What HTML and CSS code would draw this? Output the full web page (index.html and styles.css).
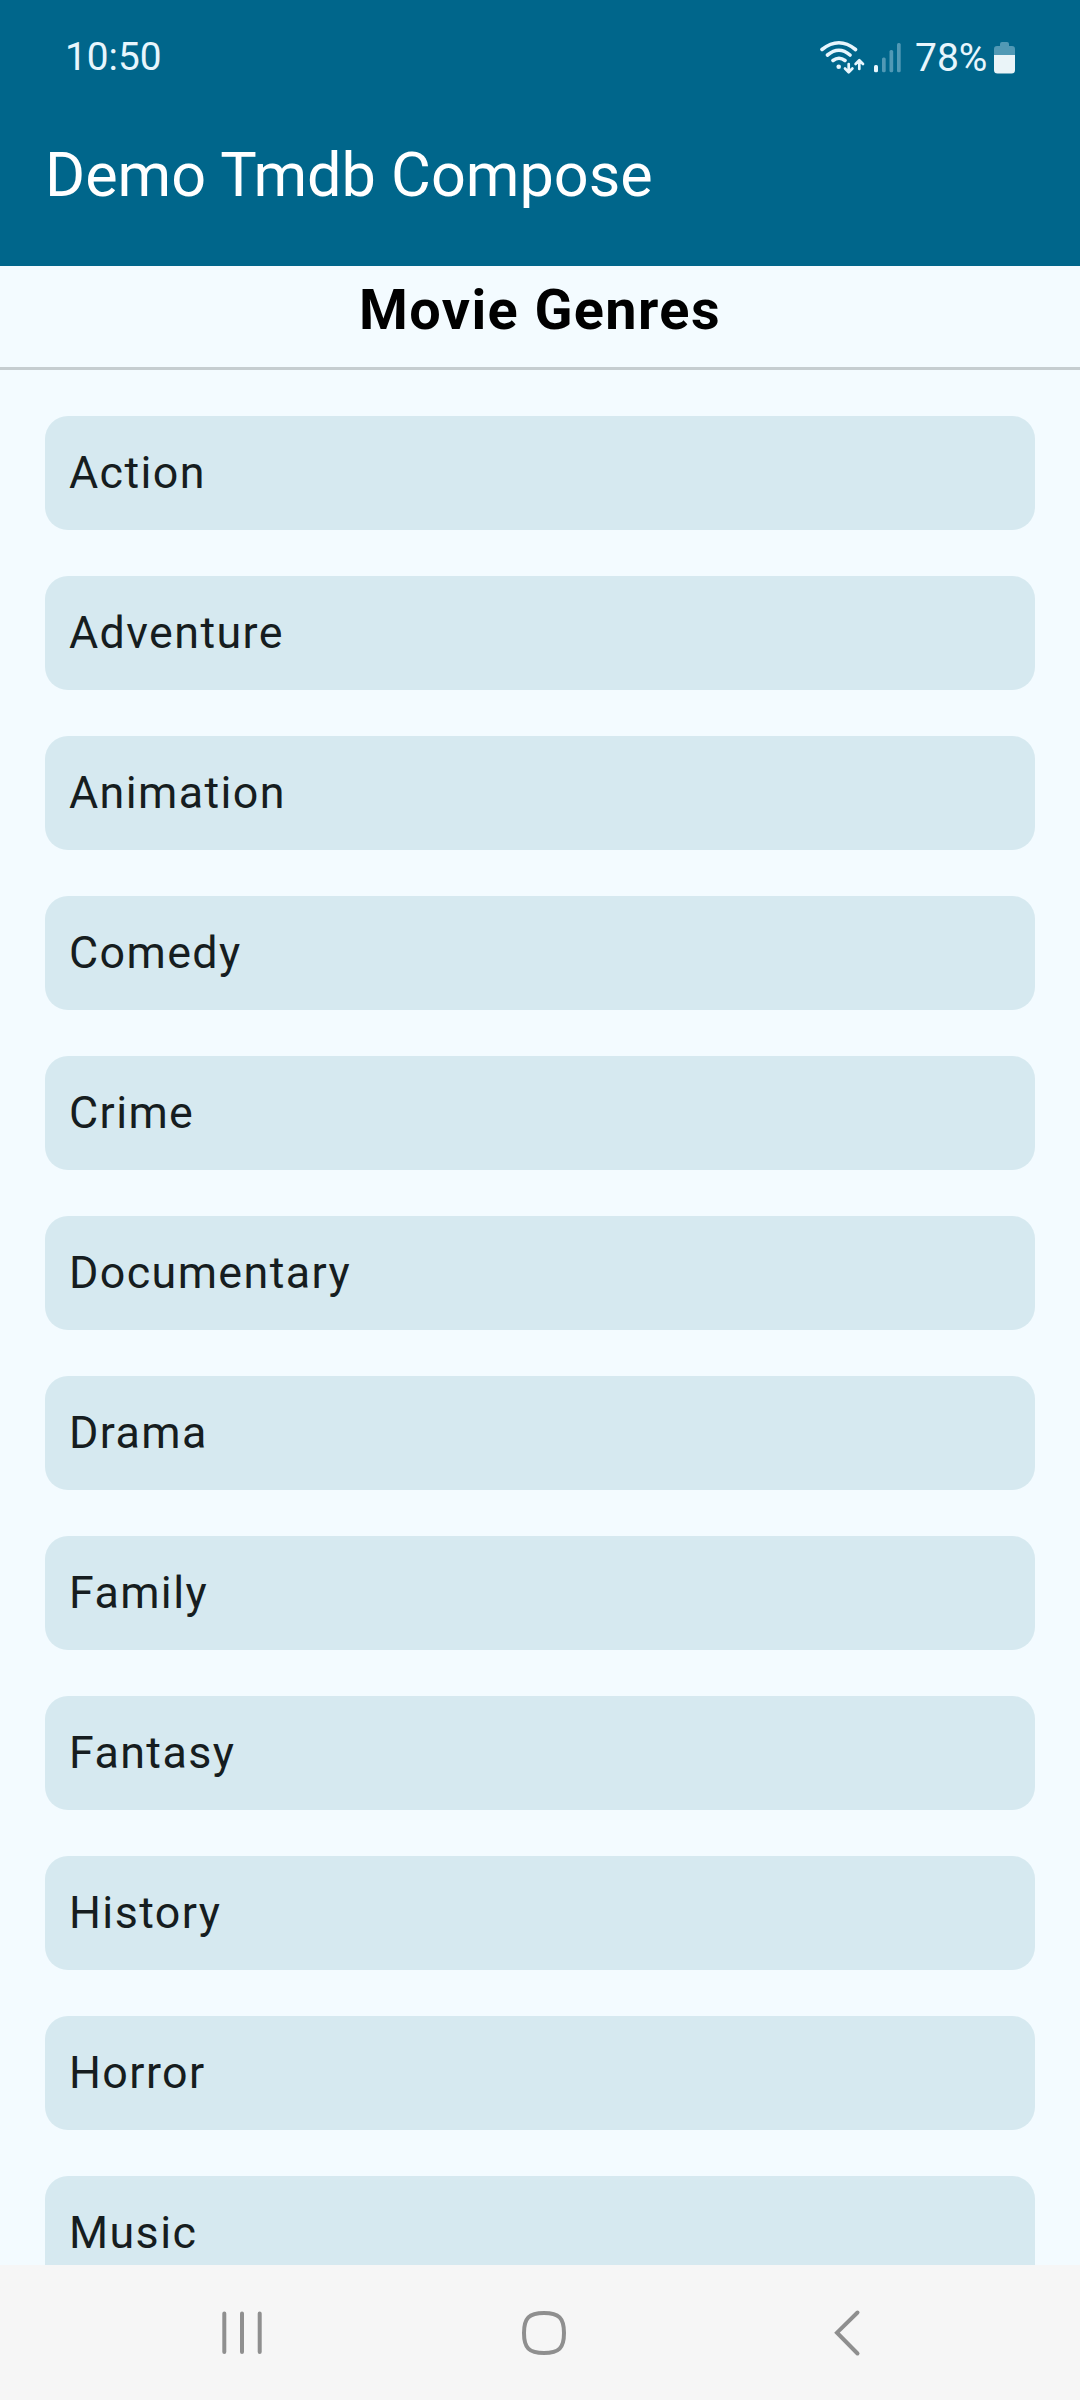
FILE: index.html
```html
<!DOCTYPE html>
<html lang="en">
<head>
<meta charset="utf-8">
<title>Demo Tmdb Compose</title>
<link rel="stylesheet" href="styles.css">
</head>
<body>
<div class="screen">
  <header class="top">
    <div class="status">
      <span class="clock">10:50</span>
      <svg class="signals" width="86" height="40" viewBox="0 0 86 40" fill="none">
        <g stroke="#e8f6fd" stroke-width="3.6" stroke-linecap="round" stroke-linejoin="round">
          <path d="M4 11.500Q21-2 37.500 11.500M9.500 17Q21 7.500 32 17M15 22.500Q21 18 27 22.500"/>
          <path stroke-width="2.700" d="M30.700 26v8m-3.700-3.500 3.700 3.700 3.700-3.700M41.300 31V22.500m-3.700 3.500 3.700-3.700 3.700 3.700"/>
        </g>
        <circle cx="20.700" cy="28.700" r="2.300" fill="#e8f6fd"/>
        <rect x="56" y="27" width="4" height="7.300" rx="1.500" fill="#e8f6fd"/>
        <g fill="#5199b5">
          <rect x="64" y="19.500" width="3.700" height="14.800" rx="1.500"/>
          <rect x="71.500" y="12" width="3.700" height="22.300" rx="1.500"/>
          <rect x="79" y="5" width="3.700" height="29.300" rx="1.500"/>
        </g>
      </svg>
      <span class="percent">78%</span>
      <svg class="battery" width="21" height="32" viewBox="0 0 21 32"><path fill="#5199b5" d="M8 0h5q2 0 2 2v2h3q3 0 3 3v6H0V7q0-3 3-3h3V2q0-2 2-2z"/><path fill="#eaf4f8" d="M0 13h21v15q0 3.500-3.500 3.500h-14Q0 31.500 0 28z"/></svg>
    </div>
    <h1 class="title">Demo Tmdb Compose</h1>
  </header>
  <main class="content">
    <h2 class="heading">Movie Genres</h2>
    <ul class="genres">
      <li class="genre">Action</li>
      <li class="genre">Adventure</li>
      <li class="genre">Animation</li>
      <li class="genre">Comedy</li>
      <li class="genre">Crime</li>
      <li class="genre">Documentary</li>
      <li class="genre">Drama</li>
      <li class="genre">Family</li>
      <li class="genre">Fantasy</li>
      <li class="genre">History</li>
      <li class="genre">Horror</li>
      <li class="genre">Music</li>
    </ul>
  </main>
  <nav class="nav">
    <svg width="1080" height="135" viewBox="0 0 1080 135" fill="none" stroke="#8f8f8f" stroke-width="4" stroke-linecap="round">
      <path d="M224.300 48.500v38.500M242 48.500v38.500M259.700 48.500v38.500"/>
      <path d="M544 48C559 48 564 53 564 68S559 88 544 88 524 83 524 68 529 48 544 48Z"/>
      <path d="M857.500 47.500 837 67.700l20.500 20.800"/>
    </svg>
  </nav>
</div>
</body>
</html>
```
FILE: styles.css
```css
body { margin: 0; font-family: Roboto, sans-serif; }
.screen { width: 1080px; height: 2400px; display: flex; flex-direction: column; overflow: hidden; background: #f3fbff; }
.top { height: 266px; flex: none; background: #00668b; color: #fff; }
.status { height: 116px; display: flex; align-items: center; padding: 0 65px; box-sizing: border-box; color: #e8f6fd; }
.clock { flex: 1; font-size: 38.8px; line-height: 46px; padding-bottom: 2px; }
.signals, .battery { flex: none; }
.percent { width: 73px; margin: 0 6px 0 11px; font-size: 39px; white-space: nowrap; }
.title { margin: 0; padding-left: 45px; height: 118px; line-height: 118px; font-size: 61.2px; font-weight: 400; }
.content { flex: 1; min-height: 0; overflow: hidden; }
.heading { margin: 0; height: 101px; line-height: 88px; text-align: center; font-size: 55.8px; font-weight: 700; letter-spacing: 1.4px; border-bottom: 3px solid #c5cdd0; color: #000; }
.genres { margin: 0; padding: 46px 45px 0; list-style: none; display: flex; flex-direction: column; gap: 46px; }
.genre { height: 114px; flex: none; line-height: 114px; padding-left: 24px; border-radius: 23px; background: #d6e9f0; color: #161d20; font-size: 44.8px; letter-spacing: 1.4px; }
.nav { height: 135px; flex: none; background: #f6f6f6; }
.nav svg { display: block; }
```
